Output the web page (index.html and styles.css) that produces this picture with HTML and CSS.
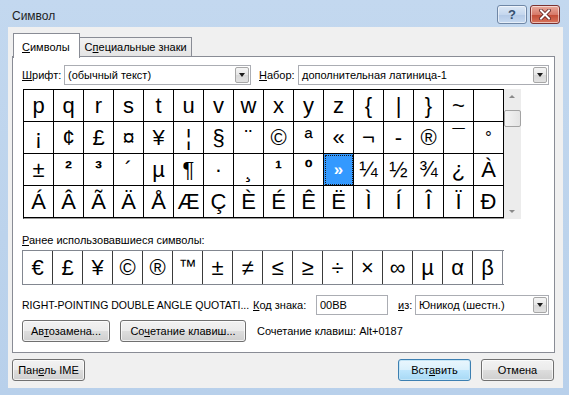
FILE: index.html
```html
<!DOCTYPE html>
<html lang="ru">
<head>
    <meta charset="UTF-8">
    <title>Символ</title>
    <link rel="stylesheet" href="styles.css">
</head>
<body>

<div class="okno">
    <!-- Заголовок окна -->
    <div class="zagolovok">
        <span class="zagolovok-tekst">Символ</span>
        <div class="knopki-okna">
            <span class="knopka-okna spravka">?</span>
            <span class="knopka-okna zakryt">
                <svg width="12" height="11" viewBox="0 0 12 11">
                    <path d="M2 1.5 L10 9.5 M10 1.5 L2 9.5" stroke="#5a1c1c" stroke-width="3.6" stroke-linecap="square"/>
                    <path d="M2 1.5 L10 9.5 M10 1.5 L2 9.5" stroke="#fff" stroke-width="2" stroke-linecap="square"/>
                </svg>
            </span>
        </div>
    </div>

    <div class="klient">
        <div class="vkladki">
            <div class="vkladka aktivnaya"><u>С</u>имволы</div>
            <div class="vkladka">С<u>п</u>ециальные знаки</div>
        </div>

        <div class="panel">
            <div class="stroka-vybor">
                <span class="metka metka-shrift"><u>Ш</u>рифт:</span>
                <div class="kombo kombo-shrift">
                    <span class="kombo-tekst">(обычный текст)</span>
                    <span class="kombo-strelka"></span>
                </div>
                <span class="metka metka-nabor"><u>Н</u>абор:</span>
                <div class="kombo kombo-nabor">
                    <span class="kombo-tekst">дополнительная латиница-1</span>
                    <span class="kombo-strelka"></span>
                </div>
            </div>

            <!-- Таблица символов -->
            <div class="tablica-obertka">
                <div class="tablica">
                    <span>p</span><span>q</span><span>r</span><span>s</span><span>t</span><span>u</span><span>v</span><span>w</span>
                    <span>x</span><span>y</span><span>z</span><span>{</span><span>|</span><span>}</span><span>~</span><span></span>

                    <span>¡</span><span>¢</span><span>£</span><span>¤</span><span>¥</span><span>¦</span><span>§</span><span>¨</span>
                    <span>©</span><span>ª</span><span>«</span><span>¬</span><span>-</span><span>®</span><span>¯</span><span class="malenkiy">°</span>

                    <span>±</span><span class="verh">²</span><span class="verh">³</span><span>´</span><span>µ</span><span>¶</span><span>·</span><span>¸</span>
                    <span class="verh">¹</span><span class="verh">º</span><span class="vybran"><i>»</i></span><span>¼</span><span>½</span><span>¾</span><span>¿</span><span>À</span>

                    <span>Á</span><span>Â</span><span>Ã</span><span>Ä</span><span>Å</span><span>Æ</span><span>Ç</span><span>È</span>
                    <span>É</span><span>Ê</span><span>Ë</span><span>Ì</span><span>Í</span><span>Î</span><span>Ï</span><span>Ð</span>
                </div>
                <div class="prokrutka">
                    <span class="prokrutka-vverh"></span>
                    <span class="polzunok"></span>
                    <span class="prokrutka-vniz"></span>
                </div>
            </div>

            <div class="metka-nedavnie"><u>Р</u>анее использовавшиеся символы:</div>
            <div class="nedavnie">
                <span>€</span><span>£</span><span>¥</span><span>©</span><span>®</span><span class="tm">™</span><span>±</span><span>≠</span>
                <span>≤</span><span>≥</span><span>÷</span><span>×</span><span>∞</span><span>µ</span><span>α</span><span>β</span>
            </div>

            <div class="stroka-kod">
                <span class="imya-znaka">RIGHT-POINTING DOUBLE ANGLE QUOTATI...</span>
                <span class="metka metka-kod"><u>К</u>од знака:</span>
                <div class="pole">00BB</div>
                <span class="metka metka-iz"><u>и</u>з:</span>
                <div class="kombo kombo-iz">
                    <span class="kombo-tekst">Юникод (шестн.)</span>
                    <span class="kombo-strelka"></span>
                </div>
            </div>

            <div class="stroka-knopki">
                <button class="knopka knopka-avto">Ав<u>т</u>озамена...</button>
                <button class="knopka knopka-klav">Со<u>ч</u>етание клавиш...</button>
                <span class="sochetanie">Сочетание клавиш: Alt+0187</span>
            </div>
        </div>

        <div class="niz">
            <button class="knopka knopka-niz">Пан<u>е</u>ль IME</button>
            <div class="niz-prava">
                <button class="knopka knopka-niz glavnaya">Вст<u>а</u>вить</button>
                <button class="knopka knopka-niz">Отмена</button>
            </div>
        </div>
    </div>
</div>

</body>
</html>
```

FILE: styles.css
```css
/* Общие стили */
body {
    margin: 0;
    width: 569px;
    height: 395px;
    overflow: hidden;
    background: linear-gradient(#c3d8ef, #bcd3ec 60%, #b8d0eb);
    font-family: "Liberation Sans", Arial, sans-serif;
    font-size: 11px;
    color: #000;
}

u {
    text-decoration: underline;
    text-underline-offset: 1px;
}

.okno {
    display: flex;
    flex-direction: column;
    height: 395px;
    padding: 0 6px 7px 8px;
    box-sizing: border-box;
}

/* Заголовок */
.zagolovok {
    height: 27px;
    margin: 0 -6px 0 -8px;
    padding: 0 9px 0 12px;
    display: flex;
    align-items: flex-start;
    justify-content: space-between;
}

.zagolovok-tekst {
    margin-top: 9px;
    font-size: 12px;
    color: #1e1e1e;
}

.knopki-okna {
    display: flex;
    gap: 3px;
    margin-top: 5px;
}

.knopka-okna {
    width: 28px;
    height: 17px;
    border: 1px solid #6f87a6;
    border-radius: 3px;
    display: flex;
    align-items: center;
    justify-content: center;
    box-shadow: inset 0 0 0 1px rgba(255, 255, 255, 0.55);
}

.spravka {
    background: linear-gradient(#dce8f6, #c5d7ee 50%, #b3c9e6 51%, #c7daf1);
    color: #35506f;
    font-weight: bold;
    font-size: 13px;
}

.zakryt {
    border-color: #7a3131;
    background: linear-gradient(#e9a99c, #d77a6a 50%, #c24a35 51%, #d8745c);
}

/* Клиентская область */
.klient {
    flex: 1;
    background: #f0f0f0;
    display: flex;
    flex-direction: column;
    padding-top: 6px;
    box-sizing: border-box;
}

.vkladki {
    display: flex;
    padding-left: 5px;
    height: 24px;
    position: relative;
    z-index: 1;
}

.vkladka {
    height: 18px;
    margin-top: 4px;
    padding: 0 4px 0 5px;
    line-height: 19px;
    border: 1px solid #898c95;
    border-bottom: none;
    border-left: none;
    background: linear-gradient(#f2f2f2, #e4e4e4);
}

.vkladka.aktivnaya {
    height: 24px;
    margin-top: 0;
    padding: 0 9px 0 8px;
    line-height: 26px;
    background: #fff;
    border-left: 1px solid #898c95;
}

.panel {
    margin: -1px 0 0 4px;
    width: 543px;
    height: 297px;
    box-sizing: border-box;
    border: 1px solid #898c95;
    background: #fff;
    padding: 8px 0 0 9px;
}

.metka {
    white-space: nowrap;
}

/* Комбобоксы */
.stroka-vybor {
    display: flex;
    align-items: center;
    height: 20px;
}

.metka-shrift {
    width: 42px;
}

.kombo {
    height: 20px;
    box-sizing: border-box;
    border: 1px solid #abadb3;
    background: #fff;
    display: flex;
    align-items: center;
    justify-content: space-between;
    padding-left: 3px;
}

.kombo-shrift {
    width: 187px;
}

.metka-nabor {
    margin-left: 8px;
    width: 39px;
}

.kombo-nabor {
    width: 251px;
}

.kombo-strelka {
    width: 14px;
    height: 16px;
    margin-right: 1px;
    border: 1px solid #a7a7a7;
    box-sizing: border-box;
    border-radius: 2px;
    background: linear-gradient(#f5f5f5, #e6e6e6 50%, #d8d8d8 51%, #e2e2e2);
    position: relative;
}

.kombo-strelka::after {
    content: "";
    position: absolute;
    left: 3px;
    top: 5px;
    border-left: 3.5px solid transparent;
    border-right: 3.5px solid transparent;
    border-top: 4px solid #1a1a1a;
}

/* Таблица символов */
.tablica-obertka {
    display: flex;
    margin-top: 4px;
    margin-left: 1px;
}

.tablica {
    display: grid;
    grid-template-columns: repeat(16, 30px);
    grid-auto-rows: 32px;
    border-left: 1px solid #000;
    border-top: 1px solid #000;
    border-bottom: 1px solid #9a9a9a;
    font-size: 22px;
}

.tablica span {
    border-right: 1px solid #000;
    border-bottom: 1px solid #000;
    display: flex;
    align-items: center;
    justify-content: center;
    line-height: 1;
}

.tablica span.verh {
    font-size: 21px;
    font-weight: bold;
    align-items: flex-start;
    padding-top: 3px;
}

.tablica span.malenkiy {
    font-size: 17px;
}

.tablica span.vybran {
    background: #3399ff;
    color: #fff;
    outline: 1px dotted #1a1a1a;
    outline-offset: -2px;
    font-size: 17px;
    font-weight: bold;
}

.tablica span.vybran i {
    font-style: normal;
}

.prokrutka {
    width: 17px;
    background: #ececec;
    position: relative;
}

.prokrutka-vverh,
.prokrutka-vniz {
    position: absolute;
    left: 5px;
    border-left: 3px solid transparent;
    border-right: 3px solid transparent;
}

.prokrutka-vverh {
    top: 6px;
    border-bottom: 3px solid #8a8a8a;
}

.prokrutka-vniz {
    bottom: 6px;
    border-top: 3px solid #8a8a8a;
}

.polzunok {
    position: absolute;
    top: 21px;
    left: 0;
    width: 15px;
    height: 15px;
    border: 1px solid #a3a3a3;
    border-radius: 2px;
    background: linear-gradient(90deg, #f4f4f4, #e4e4e4);
}

/* Недавние символы */
.metka-nedavnie {
    margin-top: 15px;
    height: 16px;
}

.nedavnie {
    display: grid;
    grid-template-columns: repeat(16, 30px);
    grid-auto-rows: 33px;
    width: 481px;
    border: 1px solid #828790;
    border-right: none;
    font-size: 22px;
}

.nedavnie span {
    border-right: 1px solid #3a3a3a;
    display: flex;
    align-items: center;
    justify-content: center;
}

.nedavnie span:last-child {
    border-right-color: #828790;
}

.nedavnie span.tm {
    font-size: 18px;
    align-items: flex-start;
    padding-top: 5px;
}

/* Код знака */
.stroka-kod {
    display: flex;
    align-items: center;
    height: 20px;
    margin-top: 10px;
}

.imya-znaka {
    width: 231px;
    font-size: 10.5px;
    white-space: nowrap;
    overflow: hidden;
}

.metka-kod {
    width: 63px;
}

.pole {
    width: 72px;
    height: 20px;
    box-sizing: border-box;
    border: 1px solid #abadb3;
    padding-left: 3px;
    line-height: 18px;
}

.metka-iz {
    margin-left: 10px;
    width: 17px;
}

.kombo-iz {
    width: 134px;
}

/* Кнопки */
.knopka {
    font-family: inherit;
    font-size: 11px;
    color: #000;
    height: 22px;
    padding: 0;
    border: 1px solid #707070;
    border-radius: 3px;
    background: linear-gradient(#f2f2f2, #ebebeb 50%, #dddddd 51%, #cfcfcf);
    box-shadow: inset 0 0 0 1px rgba(255, 255, 255, 0.7);
}

.stroka-knopki {
    display: flex;
    align-items: center;
    margin-top: 5px;
    height: 22px;
}

.knopka-avto {
    width: 88px;
}

.knopka-klav {
    width: 126px;
    margin-left: 10px;
}

.sochetanie {
    margin-left: 11px;
}

.niz {
    display: flex;
    justify-content: space-between;
    margin: 6px 9px 0 4px;
}

.niz-prava {
    display: flex;
    gap: 10px;
}

.knopka-niz {
    width: 73px;
}

.knopka-niz.glavnaya {
    border-color: #3c7fb1;
    background: linear-gradient(#eaf6fd, #d9f0fc 50%, #bee6fd 51%, #a7d9f5);
    box-shadow: inset 0 0 0 1px #c4e5f6;
}
```
